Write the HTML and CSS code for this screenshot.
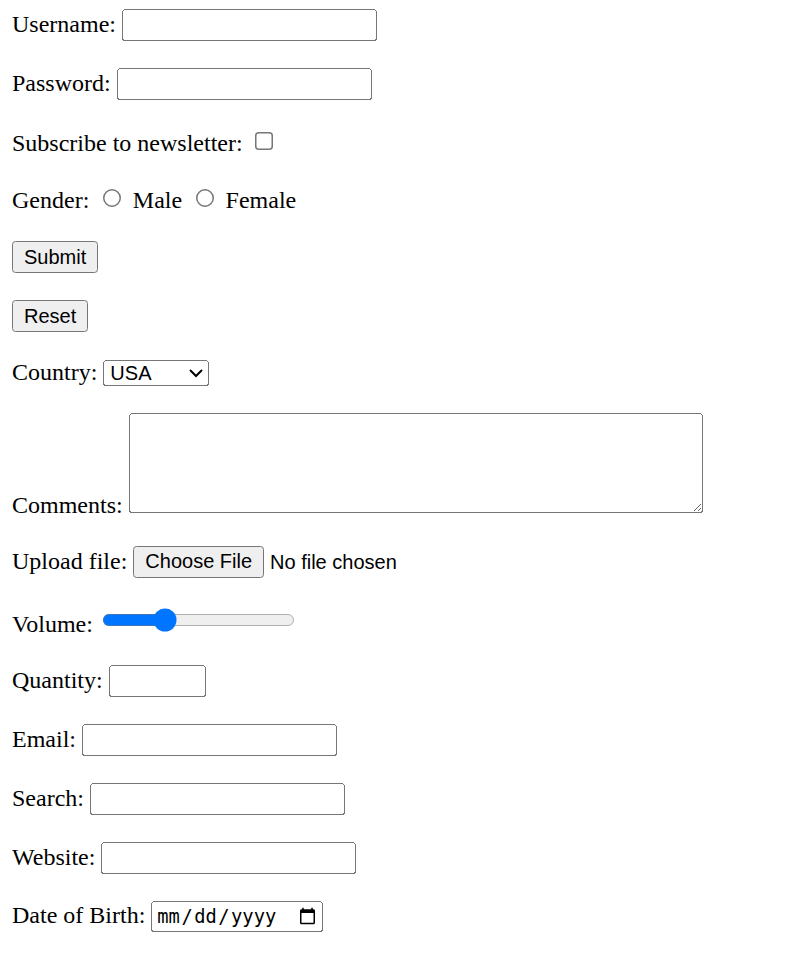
FILE: index.html
```html
<!DOCTYPE html>
<html lang="en">
<head>
<meta charset="utf-8">
<title>Form</title>
<link rel="stylesheet" href="styles.css">
</head>
<body>
<form class="form">
  <div class="row"><label for="username">Username:</label> <input type="text" id="username" name="username" class="field"></div>
  <div class="row"><label for="password">Password:</label> <input type="password" id="password" name="password" class="field"></div>
  <div class="row"><label for="subscribe">Subscribe to newsletter:</label> <input type="checkbox" id="subscribe" name="subscribe"></div>
  <div class="row">Gender: <input type="radio" id="male" name="gender" value="male"> <label for="male">Male</label> <input type="radio" id="female" name="gender" value="female"> <label for="female">Female</label></div>
  <div class="row"><input type="submit" value="Submit"></div>
  <div class="row"><input type="reset" value="Reset"></div>
  <div class="row"><label for="country">Country:</label> <select id="country" name="country" class="country"><option>USA</option><option>Canada</option><option>UK</option></select></div>
  <div class="row"><label for="comments">Comments:</label> <textarea id="comments" name="comments" class="comments"></textarea></div>
  <div class="row"><label for="file">Upload file:</label> <input type="file" id="file" name="file"></div>
  <div class="row"><label for="volume">Volume:</label> <input type="range" id="volume" name="volume" min="0" max="100" value="30"></div>
  <div class="row"><label for="quantity">Quantity:</label> <input type="number" id="quantity" name="quantity" min="1" max="10" class="qty"></div>
  <div class="row"><label for="email">Email:</label> <input type="email" id="email" name="email" class="field"></div>
  <div class="row"><label for="search">Search:</label> <input type="search" id="search" name="search" class="field"></div>
  <div class="row"><label for="website">Website:</label> <input type="url" id="website" name="website" class="field"></div>
  <div class="row"><label for="dob">Date of Birth:</label> <input type="date" id="dob" name="dob" class="date"></div>
</form>
</body>
</html>
```
FILE: styles.css
```css
html {
  zoom: 1.5;
}
body {
  margin: 6px 8px 8px;
  font-family: "Liberation Serif", "Times New Roman", serif;
  font-size: 16px;
  color: #000;
  background: #fff;
}
.row {
  margin: 0 0 18px;
}
input, select, textarea, button {
  font-family: "Liberation Sans", Arial, sans-serif;
}
.field {
  box-sizing: border-box;
  width: 170px;
}
.country {
  width: 70.5px;
}
.comments {
  width: 377.5px;
  height: 61px;
}
.qty {
  width: 57px;
}
.date {
  box-sizing: border-box;
  width: 114.5px;
  height: 21.3px;
  font-family: "DejaVu Sans Mono", "Liberation Mono", monospace;
  font-size: 12.5px;
}
```
